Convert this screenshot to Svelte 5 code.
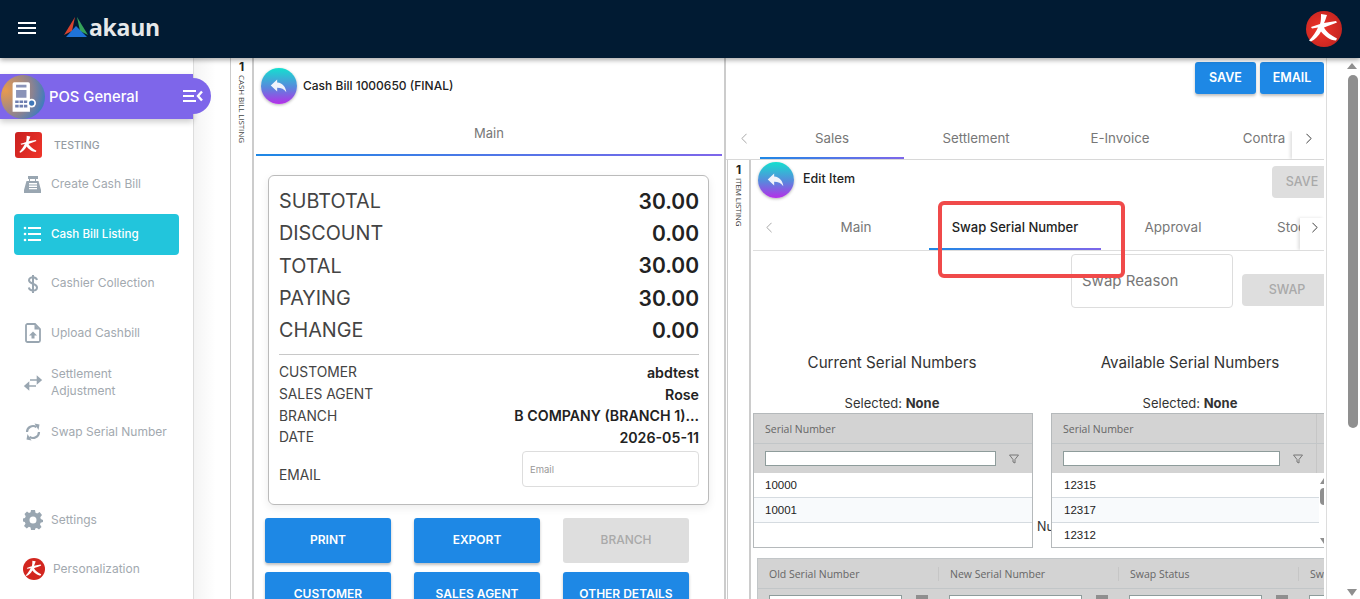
<script lang="ts">
  // POS General: просмотр кассового чека и замена серийных номеров
  const nav = [
    { key: 'create', label: 'Create Cash Bill' },
    { key: 'listing', label: 'Cash Bill Listing', active: true },
    { key: 'collection', label: 'Cashier Collection' },
    { key: 'upload', label: 'Upload Cashbill' },
    { key: 'settlement', label: 'Settlement Adjustment' },
    { key: 'swap', label: 'Swap Serial Number' },
  ];
  const totals = [
    ['SUBTOTAL', '30.00'],
    ['DISCOUNT', '0.00'],
    ['TOTAL', '30.00'],
    ['PAYING', '30.00'],
    ['CHANGE', '0.00'],
  ];
  const details = [
    ['CUSTOMER', 'abdtest'],
    ['SALES AGENT', 'Rose'],
    ['BRANCH', 'B COMPANY (BRANCH 1)...'],
    ['DATE', '2026-05-11'],
  ];
  const actions = [
    { label: 'PRINT' },
    { label: 'EXPORT' },
    { label: 'BRANCH', off: true },
    { label: 'CUSTOMER' },
    { label: 'SALES AGENT' },
    { label: 'OTHER DETAILS' },
  ];
  const swapCols = ['Old Serial Number', 'New Serial Number', 'Swap Status', 'Swap'];
</script>

{#snippet mark(cls)}
  <svg class={cls} viewBox="0 0 36 36" aria-hidden="true">
    <path d="M15 3l6 1c-1 3-1.500 5-3 8l12-2 1 1.500c-4 2-9 3-13 5 2 4 7 8 13 11l-1 2c-6 0-12-5-15-9-2 4-6 8-10 10l-2-1c4-4 7-9 9-13l-6 1-1-1.500c3-1 6-2 9-3 1-3 1-6 1-10z" fill="#fff"/>
  </svg>
{/snippet}

{#snippet backBtn()}
  <span class="back">
    <svg viewBox="0 0 24 24" width="22" height="22" aria-hidden="true"><path d="M10 5 3 11.500 10 18v-4.200c4.500 0 7.700 1.300 10 5-.6-5.500-3.800-10-10-10.600z" fill="#f1f3fb"/></svg>
  </span>
{/snippet}

{#snippet filterIcon()}
  <svg class="funnel" viewBox="0 0 12 12" width="12" height="12" aria-hidden="true"><path d="M1.500 2h9L7 6.500V10L5 9V6.500z" fill="none" stroke="#777" stroke-width="1"/></svg>
{/snippet}

{#snippet chevL()}
  <svg class="chev" viewBox="0 0 7 12" width="6" height="11" aria-hidden="true"><path d="M6.500 .5 1 6l5.500 5.500" fill="none" stroke="#999" stroke-width="1"/></svg>
{/snippet}

{#snippet chevR()}
  <svg class="chev" viewBox="0 0 7 12" width="6" height="11" aria-hidden="true"><path d="M.5 .5 6 6 .5 11.500" fill="none" stroke="#333" stroke-width="1.100"/></svg>
{/snippet}

{#snippet serialTable(cls, rows, scroll)}
  <div class="grid {cls}">
    <div class="g-head"><span>Serial Number</span></div>
    <div class="g-filter"><input type="text" aria-label="Serial Number filter" />{@render filterIcon()}</div>
    {#each rows as r, i}
      <div class="g-row" class:alt={i === 1}>{r}</div>
    {/each}
    {#if scroll}
      <div class="g-scroll"><i class="up"></i><b></b><i class="down"></i></div>
    {/if}
  </div>
{/snippet}

<header class="top">
  <svg class="burger" viewBox="0 0 18 12" width="18" height="12" aria-hidden="true"><path d="M0 1h18M0 6h18M0 11h18" stroke="#fff" stroke-width="2"/></svg>
  <svg class="tri" viewBox="0 0 24 22" width="24" height="22" aria-hidden="true">
    <path d="M11 0 0 18l8-4z" fill="#d8432e"/>
    <path d="M13 0l11 18-8-4z" fill="#35a35a"/>
    <path d="M12 9l11 11H2z" fill="#1f73d8"/>
  </svg>
  <span class="brand">akaun</span>
  <span class="top-mark">{@render mark('mark-svg')}</span>
</header>

<div class="body">
  <aside class="side">
    <div class="pill">
      <span class="pos-ico">
        <svg viewBox="0 0 30 38" width="26" height="36" aria-hidden="true">
          <path d="M5 2h16a2 2 0 0 1 2 2v32H3V4a2 2 0 0 1 2-2z" fill="#fff"/>
          <path d="M7 5h12v3H7zM7 11h12v9H7z" fill="#8a93b8"/>
          <path d="M6 23h4v3H6zM11 23h4v3h-4zM16 23h4v3h-4zM6 28h4v3H6zM11 28h4v3h-4zM16 28h4v3h-4z" fill="#6f7fb0"/>
          <circle cx="25" cy="26" r="5" fill="#fff"/><circle cx="25" cy="26" r="3" fill="#3f78b8"/>
        </svg>
      </span>
      <span class="pill-text">POS General</span>
      <span class="pill-tab">
        <svg viewBox="0 0 22 14" width="22" height="14" aria-hidden="true"><path d="M1 2h13M1 7h11M1 12h13" stroke="#fff" stroke-width="2"/><path d="M20 2.500 16 7l4 4.500" stroke="#fff" stroke-width="2.400" fill="none"/></svg>
      </span>
    </div>

    <div class="org">
      <span class="org-logo">{@render mark('mark-svg')}</span>
      <span>TESTING</span>
    </div>

    <nav class="menu">
      {#each nav as item (item.key)}
        <a class="item" class:on={item.active} href="#top">
          <svg viewBox="0 0 20 20" width="20" height="20" aria-hidden="true">
            {#if item.key === 'create'}
              <path d="M5 1h10v3h-2v2h2.500L18 15v3H1v-3L3.500 6H6V4H5zM7 4v2h5V4z" fill="#99a6b1"/>
              <path d="M6 8h8v1.500H6zM6 10.500h8V12H6zM6 13h8v1.200H6z" fill="#fff"/>
            {:else if item.key === 'listing'}
              <path d="M5 4h13M5 10h13M5 16h13" stroke="#fff" stroke-width="1.800"/>
              <circle cx="2" cy="4" r="1.300" fill="#fff"/><circle cx="2" cy="10" r="1.300" fill="#fff"/><circle cx="2" cy="16" r="1.300" fill="#fff"/>
            {:else if item.key === 'collection'}
              <path d="M14 6c-.5-2-2-2.800-4-2.800S6 4.300 6 6.200c0 4.300 8 2.700 8 7.300 0 2-1.800 3-4 3s-3.700-1-4.200-3M10 1v18" fill="none" stroke="#99a6b1" stroke-width="2"/>
            {:else if item.key === 'upload'}
              <path d="M4 1h8l5 5v11.500a1.500 1.500 0 0 1-1.500 1.500h-11A1.500 1.500 0 0 1 3 17.500v-15A1.500 1.500 0 0 1 4 1z" fill="none" stroke="#99a6b1" stroke-width="1.800"/>
              <path d="M11.500 1.500v5h5z" fill="#99a6b1"/>
              <path d="M10 8.500l4 4h-2.500v3h-3v-3H6z" fill="#99a6b1"/>
            {:else if item.key === 'settlement'}
              <path d="M7 7h11M18 7l-3.500-3v6zM13 13H2M2 13l3.500-3v6z" stroke="#99a6b1" stroke-width="1.600" fill="#99a6b1"/>
            {:else}
              <path d="M4 10a6 6 0 0 1 9.500-4.800M16 10a6 6 0 0 1-9.500 4.800" fill="none" stroke="#99a6b1" stroke-width="2.200"/>
              <path d="M11.500 1.500l5 1-1 5.500zM8.500 18.500l-5-1 1-5.500z" fill="#99a6b1"/>
            {/if}
          </svg>
          <span class="item-text">{item.label}</span>
        </a>
      {/each}
    </nav>

    <a class="foot settings" href="#top">
      <svg viewBox="0 0 20 20" width="20" height="20" aria-hidden="true">
        <path fill-rule="evenodd" d="M8 0h4l.5 2.800 1.700.7L16.600 2 19 5l-1.700 2.200.5 1.800L20 10v0l0 2-2.400.8-.6 1.800 1.500 2.300L16 19.500l-2.100-1.600-1.700.7L12 20H8l-.4-2.500-1.700-.7L3.800 18.500 1 16l1.500-2.300-.7-1.700L0 11.500v-3l2-.6.700-1.700L1.500 4 4 1.500l2 1.400 1.600-.7zM10 6.500a3.500 3.500 0 1 0 0 7 3.500 3.500 0 0 0 0-7z" fill="#99a6b1"/>
      </svg>
      <span>Settings</span>
    </a>
    <a class="foot person" href="#top">
      <span class="person-logo">{@render mark('mark-svg')}</span>
      <span>Personalization</span>
    </a>
  </aside>

  <div class="gutter"></div>

  <div class="rail">
    <b>1</b>
    <span class="v">CASH BILL LISTING</span>
  </div>

  <section class="left">
    <div class="head">
      {@render backBtn()}
      <span class="title">Cash Bill 1000650 (FINAL)</span>
    </div>
    <div class="main-tab">Main</div>
    <div class="card">
      {#each totals as [k, v]}
        <div class="sum"><span>{k}</span><b>{v}</b></div>
      {/each}
      <hr />
      {#each details as [k, v]}
        <div class="det"><span>{k}</span><b>{v}</b></div>
      {/each}
      <div class="det email"><span>EMAIL</span><input type="text" placeholder="Email" /></div>
    </div>
    <div class="acts">
      {#each actions as a}
        <button class="btn" class:off={a.off} type="button">{a.label}</button>
      {/each}
    </div>
  </section>

  <section class="right">
    <div class="right-in">
      <div class="save-row">
        <button class="btn small" type="button">SAVE</button>
        <button class="btn small" type="button">EMAIL</button>
      </div>
      <div class="tabs outer">
        <span class="chev-l">{@render chevL()}</span>
        <span class="tab sel">Sales</span>
        <span class="tab">Settlement</span>
        <span class="tab">E-Invoice</span>
        <span class="tab">Contra</span>
        <span class="chev-r">{@render chevR()}</span>
      </div>

      <div class="nested">
        <div class="rail inner">
          <b>1</b>
          <span class="v">ITEM LISTING</span>
        </div>
        <div class="edit">
          <div class="edit-head">
            {@render backBtn()}
            <span class="title">Edit Item</span>
            <button class="btn off save2" type="button">SAVE</button>
          </div>
          <div class="tabs second">
            <span class="chev-l">{@render chevL()}</span>
            <span class="tab t1">Main</span>
            <span class="tab t2 sel">Swap Serial Number</span>
            <span class="tab t3">Approval</span>
            <span class="tab t4">Stock</span>
            <span class="chev-r">{@render chevR()}</span>
          </div>
          <div class="reason-row">
            <div class="reason">Swap Reason</div>
            <button class="btn off swap" type="button">SWAP</button>
          </div>
          <div class="serials">
            <div class="col c1">
              <h3>Current Serial Numbers</h3>
              <p>Selected: <b>None</b></p>
            </div>
            <div class="col c2">
              <h3>Available Serial Numbers</h3>
              <p>Selected: <b>None</b></p>
            </div>
          </div>
          <div class="grids">
            {@render serialTable('g1', ['10000', '10001'], false)}
            <span class="nu">Number</span>
            {@render serialTable('g2', ['12315', '12317', '12312'], true)}
          </div>
          <div class="swap-grid">
            <div class="sg-head">
              {#each swapCols as c}<span>{c}</span>{/each}
            </div>
            <div class="sg-filter">
              {#each swapCols as c}
                <span><input type="text" aria-label={c} /><i></i></span>
              {/each}
            </div>
          </div>
        </div>
      </div>
    </div>
  </section>

  <div class="page-scroll"><i class="up"></i><b></b><i class="down"></i></div>
</div>

<div class="callout"></div>

<style>
  :global(body) { margin: 0; background: #fff; overflow: hidden; }
  :global(#app) { height: 599px; overflow: hidden; position: relative; font-family: Inter, "Open Sans", sans-serif; }
  * { box-sizing: border-box; }

  .top {
    height: 58px; background: #011b33; display: flex; align-items: center; padding: 0 18px 2px 18px;
    position: relative; z-index: 3; box-shadow: 0 2px 5px rgba(0, 0, 0, .35);
  }
  .tri { margin-left: 28px; }
  .brand { font: 700 23px/1 "Open Sans", sans-serif; color: #e6e8ea; margin: 0 0 2px 1px; letter-spacing: -.3px; }
  .top-mark {
    margin: 2px 0 0 auto; width: 36px; height: 36px; border-radius: 50%; background: radial-gradient(circle at 40% 50%, #f0352a, #b9201d);
    display: block;
  }
  .mark-svg { display: block; width: 100%; height: 100%; }

  .body { display: flex; height: 541px; }

  .side { width: 194px; flex: none; border-right: 1px solid #ddd; background: #fff; position: relative; z-index: 2; padding-top: 16px; display: flex; flex-direction: column; }
  .pill {
    height: 45px; width: 193px; background: #7e66ea; display: flex; align-items: center; position: relative;
    box-shadow: 0 3px 6px rgba(0, 0, 0, .2); color: #fff;
  }
  .pos-ico {
    width: 44px; height: 44px; margin-left: 1px; border-radius: 50%; flex: none; display: flex; align-items: center; justify-content: center;
    background: radial-gradient(circle at 10% 35%, #e79a4f, #8d8390 55%, #1f78d1 95%);
  }
  .pill-text { font-size: 14.800px; font-weight: 500; margin-left: 4px; }
  .pill-tab {
    position: absolute; left: 170px; top: 4px; width: 41px; height: 36px; border-radius: 0 18px 18px 0; background: #7e66ea;
    display: flex; align-items: center; padding-left: 12px;
  }
  .org { display: flex; align-items: center; height: 26px; margin: 13px 0 0 15px; font-size: 10.500px; font-weight: 500; color: #959ca3; padding-top: 1px; }
  .org-logo { width: 27px; height: 26px; border-radius: 3px; background: linear-gradient(120deg, #c8201f, #f0352a); margin: -1px 12px 0 0; padding: 2px; }

  .menu { margin: 6px 14px 0; display: flex; flex-direction: column; gap: 8.500px; }
  .item {
    height: 41px; display: flex; align-items: center; padding-left: 9px; border-radius: 4px; text-decoration: none;
    color: #a2a9af; font-size: 12px; line-height: 17px;
  }
  .item svg { flex: none; }
  .item-text { margin: -2px 0 0 8px; max-width: 122px; }
  .item.on { background: #22c5dc; color: #fff; font-weight: 500; font-size: 11.600px; }
  .item.on .item-text { margin-top: 0; }

  .foot { display: flex; align-items: center; text-decoration: none; color: #a2a9af; font-size: 12px; height: 24px; }
  .settings { margin: 55px 0 0 23px; gap: 8px; }
  .person { margin: 25px 0 0 23px; gap: 8px; }
  .person-logo { width: 22px; height: 22px; border-radius: 50%; background: #d2261f; padding: 1px; }

  .gutter { width: 36px; flex: none; background: linear-gradient(90deg, #f4f4f4, #fff 60%); }

  .rail { width: 24px; flex: none; border-left: 1px solid #ccc; border-right: 2px solid #ccc; display: flex; flex-direction: column; align-items: center; padding-top: 2px; background: #fff; }
  .rail b { font-size: 12px; line-height: 13px; color: #222; }
  .v { writing-mode: vertical-rl; font: 400 8px/10px "Open Sans", sans-serif; color: #444; margin-top: 2px; letter-spacing: -.1px; }

  .left { width: 470px; flex: none; background: #fff; padding-top: 8px; }
  .head { display: flex; align-items: center; padding-left: 7px; height: 40px; }
  .back {
    width: 36px; height: 36px; border-radius: 50%; flex: none; display: flex; align-items: center; justify-content: center;
    background: linear-gradient(180deg, #14e0cf, #5a86dd 55%, #b52fe8); box-shadow: 0 1px 3px rgba(0, 0, 0, .3);
  }
  .title { font-size: 12px; font-weight: 500; color: #222; margin: -2px 0 0 6px; }
  .main-tab {
    margin: 5px 2px 0; height: 45px; border-bottom: 2px solid; border-image: linear-gradient(90deg, #1e88e5, #7e66ea) 1;
    text-align: center; font-size: 13px; line-height: 44px; color: #777;
  }
  .card {
    margin: 19px 15px 0 14px; height: 330px; border: 1px solid #bbb; border-radius: 6px; padding: 9px 9px 0 10px;
    box-shadow: 0 3px 8px rgba(0, 0, 0, .08);
  }
  .sum { display: flex; justify-content: space-between; align-items: center; height: 32.300px; font-size: 19.800px; color: #444; }
  .sum b { font-weight: 600; color: #222; font-size: 21px; }
  hr { border: 0; border-top: 1px solid #c8c8c8; margin: 8px 0 6px; }
  .det { display: flex; justify-content: space-between; align-items: center; height: 21.700px; font-size: 13.800px; color: #444; }
  .det b { font-weight: 600; color: #222; font-size: 14.200px; }
  .email { height: 36px; margin-top: 3px; align-items: flex-start; }
  .email span { padding-top: 16px; }
  .email input {
    width: 177px; height: 36px; border: 1px solid #ddd; border-radius: 4px; padding: 0 7px; font: 9.500px Inter, sans-serif; outline: 0;
  }
  .email input::placeholder { color: #999; }

  .acts { display: grid; grid-template-columns: repeat(3, 126px); column-gap: 23px; row-gap: 9px; margin: 13px 0 0 11px; }
  .btn {
    height: 45px; border: 0; border-radius: 3px; background: #1e88e5; color: #fff; font: 600 12px Inter, sans-serif;
    box-shadow: 0 2px 3px rgba(0, 0, 0, .25); padding: 0 0 2px;
  }
  .btn.off { background: #dedede; color: #a9a9a9; font-weight: 500; box-shadow: none; }

  .right { width: 603px; flex: none; border-left: 2px solid #ccc; border-right: 1px solid #ddd; background: #fff; overflow: hidden; }
  .right-in { width: 598px; overflow: hidden; height: 100%; }
  .save-row { display: flex; justify-content: flex-end; gap: 4px; height: 73px; padding-top: 4px; }
  .btn.small { height: 32px; width: 61px; font-size: 12.500px; }
  .btn.small + .btn.small { width: 64px; }

  .tabs { display: flex; position: relative; overflow: hidden; color: #777; font-size: 13.300px; }
  .outer { height: 29px; border-bottom: 1px solid #d8d8d8; }
  .tab { text-align: center; flex: none; }
  .outer .tab { width: 144px; line-height: 14px; height: 28px; }
  .sel { border-bottom: 2px solid; border-image: linear-gradient(90deg, #1e88e5, #7e66ea) 1; }
  .chev-l { flex: none; width: 34px; display: block; padding: 2px 0 0 15px; }
  .chev { display: block; }
  .chev-r {
    position: absolute; right: 0; top: 0; bottom: 0; width: 32px; background: #fff; padding-left: 14px; padding-top: 2px;
    box-shadow: -2px 0 3px rgba(0, 0, 0, .12);
  }

  .nested { display: flex; height: 440px; }
  .rail.inner { width: 24px; margin-left: 1px; border-left: 1px solid #ccc; padding-top: 3px; flex: none; }
  .rail.inner .v { font-size: 8px; color: #333; margin-top: 2px; }
  .edit { flex: none; width: 573px; overflow: hidden; }
  .edit-head { height: 40px; display: flex; align-items: center; padding-left: 7px; }
  .edit-head .title { margin-left: 9px; margin-top: -3px; font-size: 12.500px; }
  .btn.save2 { height: 32px; width: 60px; margin: 4px -8px 0 auto; font-size: 12.500px; border-radius: 4px; flex: none; }
  .second { height: 51px; margin-left: 2px; padding-top: 18px; border-bottom: 1px solid #ddd; font-size: 13.500px; }
  .second .chev-l { width: 30px; padding: 4px 0 0 13px; }
  .second .tab { height: 32px; line-height: 19px; }
  .t1 { width: 146px; }
  .t2 { width: 172px; color: #222; font-weight: 500; font-size: 13px; }
  .t3 { width: 144px; }
  .t4 { width: 100px; text-align: left !important; padding-left: 32px; }
  .second .chev-r { top: 18px; width: 24px; padding-left: 12px; padding-top: 4px; }

  .reason-row { display: flex; align-items: flex-start; margin-top: 3px; padding-left: 320px; height: 54px; }
  .reason {
    width: 162px; height: 54px; border: 1px solid #ddd; border-radius: 4px; font-size: 15px; color: #777; padding: 16px 0 0 10px; flex: none;
  }
  .btn.swap { width: 90px; height: 32px; margin: 20px 0 0 9px; font-size: 12.500px; border-radius: 4px; flex: none; }

  .serials { display: flex; height: 105px; }
  .col { text-align: center; flex: none; color: #333; }
  .c1 { width: 282px; }
  .c2 { width: 284px; margin-left: 15px; }
  .col h3 { font-size: 15.200px; font-weight: 400; margin: 45px 0 0; line-height: 20px; }
  .col p { font-size: 13px; margin: 21px 0 0; line-height: 18px; }
  .col p b { font-weight: 700; }

  .grids { display: flex; margin-left: 2px; height: 135px; }
  .grid { width: 280px; height: 135px; flex: none; border: 1px solid #b5b9bb; position: relative; overflow: hidden; font-family: "Liberation Sans", sans-serif; }
  .g2 { width: 290px; }
  .g-head { height: 30px; background: #d3d3d3; border-bottom: 1px solid #c2c6c8; font: 10.500px/30px "Open Sans", sans-serif; color: #666; padding-left: 11px; }
  .g-filter { height: 29px; background: #d3d3d3; display: flex; align-items: center; padding-left: 11px; position: relative; }
  .g2 .g-head, .g2 .g-filter { background: linear-gradient(90deg, #d3d3d3 264px, #c6c6c6 264px, #c6c6c6 265px, #d3d3d3 265px); }
  .g-filter input { height: 15px; width: 231px; border: 1px solid #8e9c9b; background: #fff; padding: 0; }
  .g2 .g-filter input { width: 217px; }
  .funnel { margin-left: 12px; }
  .g-row { height: 25px; border-bottom: 1px solid #d5dbe0; font-size: 11.500px; line-height: 25px; color: #222; padding-left: 11px; background: #fff; }
  .g2 .g-row { padding-left: 12px; }
  .alt { background: #f8fafc; }
  .nu { width: 18px; flex: none; overflow: hidden; font-size: 12.500px; color: #333; padding: 106px 0 0 4px; white-space: nowrap; }
  .g-scroll { position: absolute; left: 267px; top: 59px; bottom: 0; width: 10px; background: #fff; display: flex; flex-direction: column; align-items: center; }
  .g-scroll b { width: 8px; height: 17px; background: #8f8f8f; border-radius: 4px; margin-top: 4px; }
  .g-scroll .up { margin-top: 5px; }
  .g-scroll .down { margin-top: auto; margin-bottom: 3px; }
  .up, .down { display: block; width: 0; height: 0; border-left: 4px solid transparent; border-right: 4px solid transparent; }
  .up { border-bottom: 6px solid #8f8f8f; }
  .down { border-top: 6px solid #8f8f8f; }

  .swap-grid { margin: 10px 0 0 6px; width: 580px; border: 1px solid #c2c6c8; background: #d3d3d3; font: 10.500px "Open Sans", sans-serif; color: #666; }
  .sg-head { display: flex; height: 30px; border-bottom: 1px solid #c2c6c8; align-items: center; }
  .sg-head span { width: 180px; flex: none; padding-left: 11px; }
  .sg-head span + span { border-left: 1px solid #c6c6c6; }
  .sg-filter { display: flex; height: 30px; align-items: flex-start; padding-top: 6px; }
  .sg-filter span { width: 180px; flex: none; padding-left: 11px; display: flex; gap: 14px; }
  .sg-filter input { width: 133px; height: 15px; border: 1px solid #8e9c9b; padding: 0; background: #fff; }
  .sg-filter i { width: 12px; height: 10px; background: #8f8f8f; }

  .page-scroll { flex: 1; position: relative; background: #fff; display: flex; flex-direction: column; align-items: flex-end; padding: 5px 2px 3px 0; }
  .page-scroll .up { margin-right: 1px; border-left-width: 5px; border-right-width: 5px; }
  .page-scroll .down { margin-right: 1px; margin-top: auto; border-left-width: 5px; border-right-width: 5px; border-top-width: 7px; }
  .page-scroll b { width: 10px; height: 353px; margin-top: 6px; background: #8f8f8f; border-radius: 5px; }

  .callout { position: absolute; left: 938px; top: 201px; width: 187px; height: 77px; border: 4px solid #f04a4a; border-radius: 6px; z-index: 4; pointer-events: none; }
</style>
